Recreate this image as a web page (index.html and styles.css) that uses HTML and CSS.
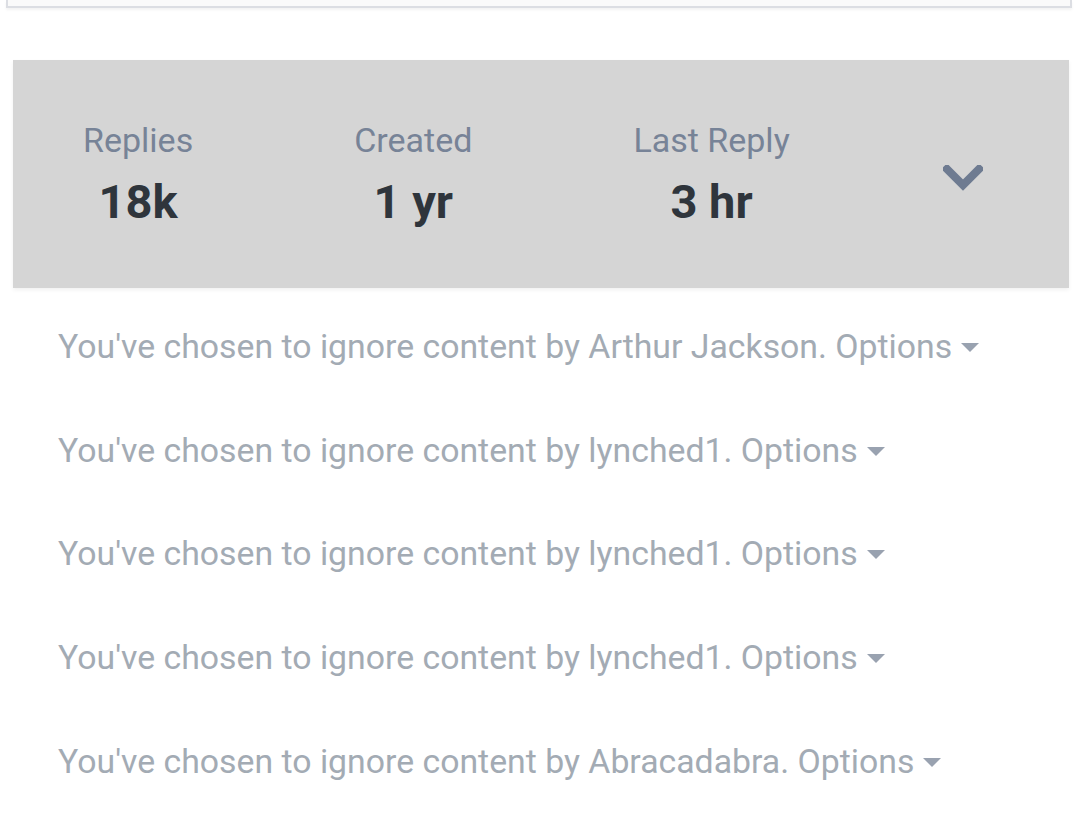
FILE: index.html
```html
<!DOCTYPE html>
<html>
<head>
<meta charset="utf-8">
<link rel="stylesheet" href="styles.css">
</head>
<body>
<div class="top-card"></div>
<div class="stats">
  <div class="stat-group">
    <div class="stat"><div class="label">Replies</div><div class="value">18k</div></div>
    <div class="stat"><div class="label">Created</div><div class="value">1 yr</div></div>
    <div class="stat"><div class="label">Last Reply</div><div class="value">3 hr</div></div>
  </div>
  <div class="toggle">
    <svg width="40" height="27" viewBox="0 0 40 27"><path d="M4 4 L20 20 L36 4" fill="none" stroke="#6e7b91" stroke-width="8" stroke-linejoin="miter" stroke-linecap="square"/></svg>
  </div>
</div>
<div class="ignored">
  <div class="row">You've chosen to ignore content by Arthur Jackson. <span class="opt">Options<span class="caret"></span></span></div>
  <div class="row">You've chosen to ignore content by lynched1. <span class="opt">Options<span class="caret"></span></span></div>
  <div class="row">You've chosen to ignore content by lynched1. <span class="opt">Options<span class="caret"></span></span></div>
  <div class="row">You've chosen to ignore content by lynched1. <span class="opt">Options<span class="caret"></span></span></div>
  <div class="row">You've chosen to ignore content by Abracadabra. <span class="opt">Options<span class="caret"></span></span></div>
</div>
</body>
</html>
```
FILE: styles.css
```css
html, body {
  margin: 0;
  padding: 0;
  background: #ffffff;
  font-family: Roboto, "Liberation Sans", sans-serif;
}
body {
  width: 1080px;
  height: 835px;
  overflow: hidden;
}
.top-card {
  height: 6px;
  margin: 0 8px 0 6px;
  background: #fafafa;
  border: 2px solid #dcdee3;
  border-top: none;
  box-shadow: 0 2px 3px rgba(0,0,0,0.05);
}
.stats {
  margin: 52px 11px 0 13px;
  height: 228px;
  box-sizing: border-box;
  background: #d5d5d5;
  display: flex;
  align-items: flex-start;
  padding: 60px 86px 0 70px;
  box-shadow: 0 2px 4px rgba(0,0,0,0.06);
}
.stat-group {
  display: flex;
  gap: 161px;
}
.stat {
  flex-shrink: 0;
  text-align: center;
  white-space: nowrap;
}
.label {
  font-size: 34px;
  line-height: 40px;
  color: #778397;
}
.value {
  margin-top: 14px;
  font-size: 47px;
  line-height: 56px;
  font-weight: 700;
  color: #2f353c;
}
.toggle {
  flex-shrink: 0;
  margin-left: auto;
  margin-top: 45px;
  width: 40px;
  height: 27px;
}
.toggle svg { display: block; }
.ignored {
  padding: 39px 0 0 58px;
}
.row {
  font-size: 33.8px;
  line-height: 40px;
  height: 103.7px;
  color: #a3abb4;
  white-space: nowrap;
}
.caret {
  display: inline-block;
  width: 0;
  height: 0;
  margin-left: 9px;
  vertical-align: 6px;
  border-left: 9px solid transparent;
  border-right: 9px solid transparent;
  border-top: 9px solid #99a2b0;
}
```
